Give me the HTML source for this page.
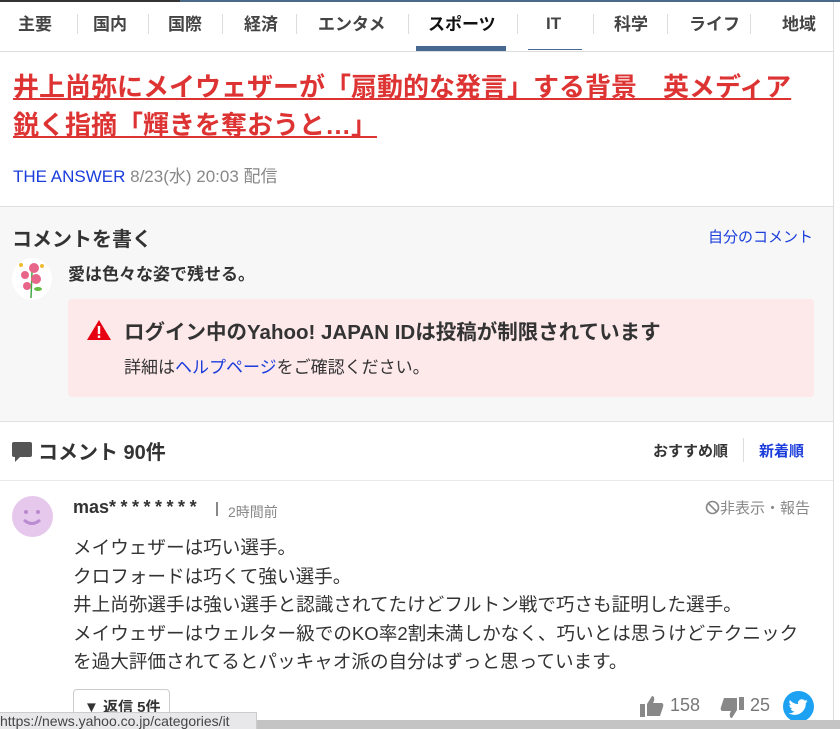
<!DOCTYPE html>
<html><head><meta charset="utf-8">
<style>
*{box-sizing:border-box;margin:0;padding:0}
body{width:840px;height:729px;overflow:hidden;background:#fff;font-family:"Liberation Sans","Noto Sans CJK JP",sans-serif;color:#333;position:relative}
.wrap{position:absolute;left:0;top:0;width:834px;height:729px;border-right:1px solid #ddd}
.topline{position:absolute;left:0;top:0;width:840px;height:2px;background:#4a6a8a}
.topline:before{content:"";position:absolute;left:0;top:0;width:180px;height:2px;background:#333}
.nav{position:absolute;top:2px;left:0;width:834px;height:50px;border-bottom:1px solid #ddd}
.nav span{position:absolute;top:8px;font-size:17px;font-weight:bold;color:#444;white-space:nowrap}
.nav i{position:absolute;top:12px;width:1px;height:20px;background:#ddd}
.ul{position:absolute;background:#48698f}
h1{position:absolute;left:13px;top:68px;width:800px;font-size:26px;line-height:38px;color:#d33;font-weight:bold;text-decoration:underline;letter-spacing:0}
.meta{position:absolute;left:13px;top:162px;font-size:17px;color:#888}
.meta b{font-weight:normal;color:#1a3ddb}
.gray{position:absolute;left:0;top:206px;width:833px;height:216px;background:#f7f7f7;border-top:1px solid #e0e0e0;border-bottom:1px solid #e0e0e0}
.ttl{position:absolute;left:12px;top:16px;font-size:20px;font-weight:bold;color:#333}
.my{position:absolute;right:20px;top:19px;font-size:15px;color:#1a3ddb}
.av{position:absolute;left:12px;top:51px;width:40px;height:42px;border-radius:50%;background:#fff}
.motto{position:absolute;left:68px;top:53px;font-size:17px;font-weight:bold}
.pink{position:absolute;left:68px;top:92px;width:746px;height:98px;background:#fde8ea;border-radius:4px}
.pink .m{position:absolute;left:56px;top:16px;font-size:20.5px;font-weight:bold}
.pink .s{position:absolute;left:56px;top:54px;font-size:17px}
.pink .s a{color:#1a3ddb}
.chead{position:absolute;left:0;top:436px;font-size:20px;font-weight:bold}
.sort1{position:absolute;left:653px;top:440px;font-size:15px;font-weight:bold;color:#333}
.sort2{position:absolute;left:759px;top:440px;font-size:15px;font-weight:bold;color:#1a3ddb}
.sep{position:absolute;left:743px;top:438px;width:1px;height:24px;background:#ddd}
.hr{position:absolute;left:0;top:480px;width:833px;height:1px;background:#e8e8e8}
.face{position:absolute;left:12px;top:496px;width:41px;height:41px;border-radius:50%;background:#e6c8ec}
.name{position:absolute;left:73px;top:497px;font-size:18px;font-weight:bold;color:#333}
.name em{font-style:normal;letter-spacing:4.5px}
.time{position:absolute;left:228px;top:502px;font-size:14px;color:#888}
.bar{position:absolute;left:216px;top:502px;width:2px;height:14px;background:#888}
.rep{position:absolute;left:705px;top:497px;font-size:15px;color:#888}
.body{position:absolute;left:73px;top:534px;font-size:18.6px;line-height:28.5px;color:#333;white-space:nowrap}
.btn{position:absolute;left:73px;top:689px;width:97px;height:36px;border:1px solid #ccc;border-radius:4px;font-size:15px;font-weight:bold;padding:6px 0 0 10px}
.cnt{position:absolute;top:695px;font-size:18px;color:#777}
.tw{position:absolute;left:783px;top:691px;width:31px;height:31px;border-radius:50%;background:#1da1f2}
.status{position:absolute;left:0;top:712px;width:257px;height:17px;background:#e8e8ea;border:1px solid #ccc;border-left:none;border-bottom:none;font-size:14px;color:#444;line-height:16px;overflow:hidden;white-space:nowrap}
.scroll{position:absolute;left:257px;top:720px;width:583px;height:9px;background:#c4c4c4}
</style></head><body>
<div class="wrap">
<div class="nav">
<span style="left:18px">主要</span><i style="left:77px"></i>
<span style="left:93px">国内</span><i style="left:148px"></i>
<span style="left:168px">国際</span><i style="left:222px"></i>
<span style="left:244px">経済</span><i style="left:296px"></i>
<span style="left:318px">エンタメ</span><i style="left:408px"></i>
<span style="left:428px;color:#111">スポーツ</span><i style="left:517px"></i>
<span style="left:546px;top:12px">IT</span><i style="left:593px"></i>
<span style="left:614px">科学</span><i style="left:667px"></i>
<span style="left:689px">ライフ</span><i style="left:750px"></i>
<span style="left:782px">地域</span>
<div class="ul" style="left:416px;top:44px;width:90px;height:5px"></div>
<div class="ul" style="left:528px;top:47px;width:54px;height:1px"></div>
</div>
<h1>井上尚弥にメイウェザーが「扇動的な発言」する背景　英メディア<br>鋭く指摘「輝きを奪おうと…」</h1>
<div class="meta"><b>THE ANSWER</b> 8/23(水) 20:03 配信</div>
<div class="gray">
<div class="ttl">コメントを書く</div>
<div class="my">自分のコメント</div>
<div class="av"><svg width="40" height="42" viewBox="0 0 40 42"><path d="M20 14 L19 40" stroke="#4a4" stroke-width="1.5"/><circle cx="22" cy="10" r="5" fill="#e8658a"/><circle cx="13" cy="17" r="4" fill="#e8658a"/><circle cx="24" cy="21" r="5" fill="#e8658a"/><circle cx="15" cy="28" r="4" fill="#e8658a"/><ellipse cx="26" cy="31" rx="4" ry="2" fill="#6b4"/><circle cx="9" cy="7" r="2" fill="#eb3"/><circle cx="30" cy="8" r="2" fill="#eb3"/></svg></div>
<div class="motto">愛は色々な姿で残せる。</div>
<div class="pink">
<svg style="position:absolute;left:18px;top:20px" width="26" height="22" viewBox="0 0 26 22"><path d="M13 1 L25 21 L1 21 Z" fill="#e60012"/><rect x="11.8" y="7" width="2.4" height="8" fill="#fff"/><rect x="11.8" y="16.5" width="2.4" height="2.4" fill="#fff"/></svg>
<div class="m">ログイン中のYahoo! JAPAN IDは投稿が制限されています</div>
<div class="s">詳細は<a>ヘルプページ</a>をご確認ください。</div>
</div>
</div>
<svg style="position:absolute;left:11px;top:441px" width="23" height="21" viewBox="0 0 23 21"><rect x="1" y="1" width="20" height="15" rx="2" fill="#555"/><path d="M4 15 L4 21 L10 15Z" fill="#555"/></svg>
<div class="chead" style="left:38px">コメント 90件</div>
<div class="sort1">おすすめ順</div><div class="sep"></div><div class="sort2">新着順</div>
<div class="hr"></div>
<div class="face"><svg width="41" height="41"><circle cx="14" cy="16" r="2" fill="#b98bd0"/><circle cx="26" cy="16" r="2" fill="#b98bd0"/><path d="M12 24 Q20 31 28 24" stroke="#b98bd0" stroke-width="3" fill="none"/></svg></div>
<div class="name">mas<em>********</em></div><div class="bar"></div><div class="time">2時間前</div>
<div class="rep"><svg width="15" height="15" style="vertical-align:-2px"><circle cx="7.5" cy="7.5" r="6" stroke="#888" stroke-width="1.6" fill="none"/><path d="M3.5 3.5 L11.5 11.5" stroke="#888" stroke-width="1.6"/></svg>非表示・報告</div>
<div class="body">メイウェザーは巧い選手。<br>クロフォードは巧くて強い選手。<br>井上尚弥選手は強い選手と認識されてたけどフルトン戦で巧さも証明した選手。<br>メイウェザーはウェルター級でのKO率2割未満しかなく、巧いとは思うけどテクニック<br>を過大評価されてるとパッキャオ派の自分はずっと思っています。</div>
<div class="btn">▼ 返信 5件</div>
<svg style="position:absolute;left:640px;top:695px" width="24" height="22" viewBox="0 0 24 22"><rect x="0" y="9" width="5" height="13" fill="#888"/><path d="M7 9 L12 1 Q15 1 14 6 L13 8 L22 8 Q24 9 23 12 L20 21 L7 21Z" fill="#888"/></svg>
<div class="cnt" style="left:670px">158</div>
<svg style="position:absolute;left:720px;top:697px" width="24" height="22" viewBox="0 0 24 22"><rect x="19" y="0" width="5" height="13" fill="#888"/><path d="M17 13 L12 21 Q9 21 10 16 L11 14 L2 14 Q0 13 1 10 L4 1 L17 1Z" fill="#888"/></svg>
<div class="cnt" style="left:750px">25</div>
<div class="tw"><svg width="31" height="31" viewBox="0 0 24 24"><path transform="translate(4.5 5) scale(0.62)" d="M23.6 4.6c-.9.4-1.8.6-2.8.8 1-.6 1.8-1.6 2.2-2.7-1 .6-2 1-3.1 1.2C19 2.9 17.7 2.3 16.3 2.3c-2.7 0-4.9 2.2-4.9 4.9 0 .4 0 .8.1 1.1C7.4 8.1 3.8 6.1 1.4 3.1c-.4.7-.7 1.6-.7 2.5 0 1.7.9 3.2 2.2 4.1-.8 0-1.6-.2-2.2-.6v.1c0 2.4 1.7 4.4 3.900 4.8-.4.1-.8.2-1.3.2-.3 0-.6 0-.9-.1.6 2 2.4 3.4 4.6 3.4-1.7 1.3-3.8 2.1-6.1 2.1-.4 0-.8 0-1.2-.1 2.2 1.4 4.8 2.2 7.5 2.2 9.1 0 14-7.5 14-14v-.6c1-.7 1.8-1.6 2.4-2.5z" fill="#fff"/></svg></div>
</div>
<div class="topline"></div>
<div class="scroll"></div>
<div class="status">https://news.yahoo.co.jp/categories/it</div>
</body></html>
